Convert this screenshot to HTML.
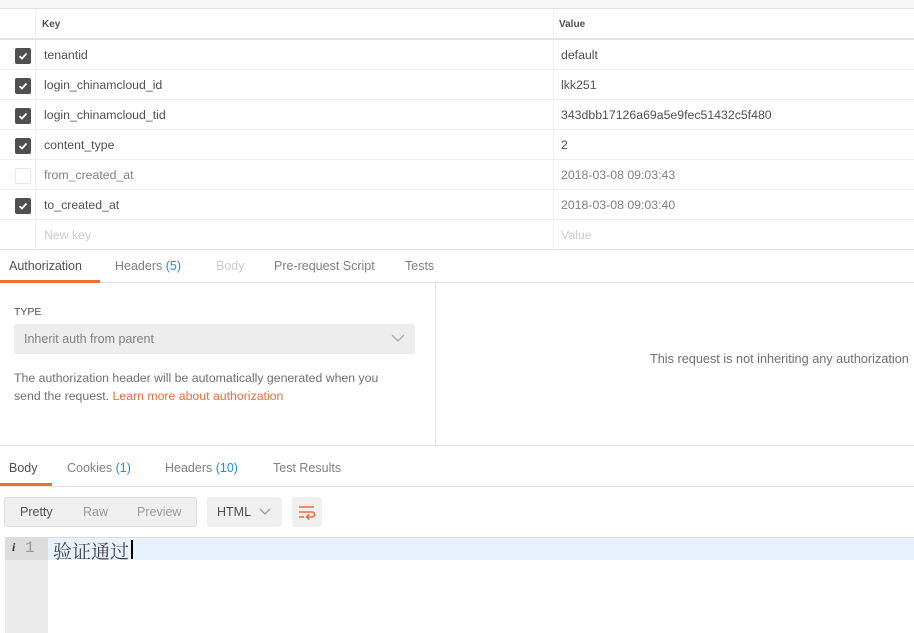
<!DOCTYPE html><html><head><style>
*{box-sizing:border-box;margin:0;padding:0}
body{width:914px;height:633px;overflow:hidden;background:#fff;font-family:"Liberation Sans",sans-serif;font-size:12px;color:#505050;position:relative}
.a{position:absolute}
.row{position:absolute;left:0;width:914px;height:30px;border-bottom:1px solid #ececec}
.cb{position:absolute;left:15px;top:8px;width:16px;height:16px;border-radius:2px;background:#505050}
.cb svg{position:absolute;left:3px;top:3px}
.cbe{background:#fff;border:1px solid #e6e6e6}
.k{position:absolute;left:44px;top:8px;font-size:12.3px}
.v{position:absolute;left:561px;top:8px;font-size:12.3px}
.vl{position:absolute;top:0;width:1px;height:30px;background:#f0f0f0}
.tab{position:absolute;font-size:12.5px;color:#808080}
.blue{color:#1a8fe8}
</style></head><body>
<div class="a" style="left:0;top:0;width:914px;height:9px;background:#f7f7f7;border-bottom:1px solid #e3e3e3"></div>
<div class="row" style="top:9px;border-bottom:2px solid #e3e3e3;height:31px"><div class="vl" style="left:35px"></div><div class="vl" style="left:553px"></div><b style="position:absolute;left:42px;top:10px;font-size:10px;color:#505050">Key</b><b style="position:absolute;left:559px;top:10px;font-size:10px;color:#505050">Value</b></div>
<div class="row" style="top:40px"><div class="vl" style="left:35px"></div><div class="vl" style="left:553px"></div><div class="cb"><svg width="10" height="10"><path d="M1.5 5.2L4 7.5L8.5 2.5" stroke="#fff" stroke-width="1.8" fill="none"/></svg></div><span class="k">tenantid</span><span class="v">default</span></div>
<div class="row" style="top:70px"><div class="vl" style="left:35px"></div><div class="vl" style="left:553px"></div><div class="cb"><svg width="10" height="10"><path d="M1.5 5.2L4 7.5L8.5 2.5" stroke="#fff" stroke-width="1.8" fill="none"/></svg></div><span class="k">login_chinamcloud_id</span><span class="v">lkk251</span></div>
<div class="row" style="top:100px"><div class="vl" style="left:35px"></div><div class="vl" style="left:553px"></div><div class="cb"><svg width="10" height="10"><path d="M1.5 5.2L4 7.5L8.5 2.5" stroke="#fff" stroke-width="1.8" fill="none"/></svg></div><span class="k">login_chinamcloud_tid</span><span class="v">343dbb17126a69a5e9fec51432c5f480</span></div>
<div class="row" style="top:130px"><div class="vl" style="left:35px"></div><div class="vl" style="left:553px"></div><div class="cb"><svg width="10" height="10"><path d="M1.5 5.2L4 7.5L8.5 2.5" stroke="#fff" stroke-width="1.8" fill="none"/></svg></div><span class="k">content_type</span><span class="v">2</span></div>
<div class="row" style="top:160px"><div class="vl" style="left:35px"></div><div class="vl" style="left:553px"></div><div class="cb cbe"></div><span class="k" style="color:#808080">from_created_at</span><span class="v" style="color:#808080">2018-03-08 09:03:43</span></div>
<div class="row" style="top:190px"><div class="vl" style="left:35px"></div><div class="vl" style="left:553px"></div><div class="cb"><svg width="10" height="10"><path d="M1.5 5.2L4 7.5L8.5 2.5" stroke="#fff" stroke-width="1.8" fill="none"/></svg></div><span class="k">to_created_at</span><span class="v" style="color:#808080">2018-03-08 09:03:40</span></div>
<div class="row" style="top:220px;border-bottom:1px solid #e3e3e3"><div class="vl" style="left:35px"></div><div class="vl" style="left:553px"></div><span class="k" style="color:#ccc">New key</span><span class="v" style="color:#ccc">Value</span></div>
<div class="a" style="left:0;top:250px;width:914px;height:33px;border-bottom:1px solid #e3e3e3"></div>
<div class="a" style="left:0;top:280px;width:100px;height:3px;background:#f26b3a"></div>
<span class="tab" style="left:9px;top:259px;color:#505050">Authorization</span>
<span class="tab" style="left:115px;top:259px">Headers <span class="blue">(5)</span></span>
<span class="tab" style="left:216px;top:259px;color:#ccc">Body</span>
<span class="tab" style="left:274px;top:259px">Pre-request Script</span>
<span class="tab" style="left:405px;top:259px">Tests</span>
<div class="a" style="left:435px;top:283px;width:1px;height:162px;background:#e3e3e3"></div>
<span class="a" style="left:14px;top:306px;font-size:10.5px;color:#505050">TYPE</span>
<div class="a" style="left:14px;top:324px;width:401px;height:30px;background:#ededed;border-radius:3px"></div>
<span class="a" style="left:24px;top:332px;font-size:12.5px;color:#808080">Inherit auth from parent</span>
<svg class="a" style="left:391px;top:334px" width="14" height="9"><path d="M1 1L7 7L13 1" stroke="#aaa" stroke-width="1.3" fill="none"/></svg>
<div class="a" style="left:14px;top:369px;width:385px;line-height:18px;font-size:12.3px;color:#707070">The authorization header will be automatically generated when you send the request. <span style="color:#f26b3a">Learn more about authorization</span></div>
<span class="a" style="left:650px;top:352px;font-size:12.7px;color:#707070">This request is not inheriting any authorization</span>
<div class="a" style="left:0;top:445px;width:914px;height:1px;background:#e3e3e3"></div>
<div class="a" style="left:0;top:486px;width:914px;height:1px;background:#e3e3e3"></div>
<div class="a" style="left:0;top:483px;width:52px;height:3px;background:#f26b3a"></div>
<span class="tab" style="left:9px;top:461px;color:#505050">Body</span>
<span class="tab" style="left:67px;top:461px">Cookies <span class="blue">(1)</span></span>
<span class="tab" style="left:165px;top:461px">Headers <span class="blue">(10)</span></span>
<span class="tab" style="left:273px;top:461px">Test Results</span>
<div class="a" style="left:4px;top:497px;width:193px;height:30px;background:#efefef;border:1px solid #ddd;border-radius:3px"></div>
<span class="a" style="left:20px;top:505px;font-size:12.5px;color:#505050">Pretty</span>
<span class="a" style="left:83px;top:505px;font-size:12.5px;color:#999">Raw</span>
<span class="a" style="left:137px;top:505px;font-size:12.5px;color:#999">Preview</span>
<div class="a" style="left:207px;top:497px;width:75px;height:30px;background:#efefef;border-radius:3px"></div>
<span class="a" style="left:217px;top:505px;font-size:12.5px;color:#505050">HTML</span>
<svg class="a" style="left:259px;top:508px" width="12" height="8"><path d="M1 1L6 6L11 1" stroke="#999" stroke-width="1.3" fill="none"/></svg>
<div class="a" style="left:292px;top:497px;width:30px;height:30px;background:#efefef;border-radius:3px"></div>
<svg class="a" style="left:298px;top:503px" width="18" height="18"><path d="M1 4H16M1 9H14a2.5 2.5 0 0 1 0 5H9M1 14H6M11 11.5L8.5 14L11 16.5" stroke="#f26b3a" stroke-width="1.6" fill="none"/></svg>
<div class="a" style="left:5px;top:537px;width:909px;height:1px;background:#ddd"></div>
<div class="a" style="left:5px;top:538px;width:43px;height:95px;background:#ebebeb"></div>
<div class="a" style="left:48px;top:538px;width:866px;height:22px;background:#e8f2fe"></div>
<div class="a" style="left:5px;top:538px;width:43px;height:22px;background:#dcdcdc"></div>
<span class="a" style="left:12px;top:540px;font-family:'Liberation Serif',serif;font-style:italic;font-size:12px;color:#333;font-weight:bold">i</span>
<span class="a" style="left:25px;top:539px;font-family:'Liberation Mono',monospace;font-size:16px;color:#999">1</span>
<span class="a" style="left:53px;top:537px;font-family:'Liberation Serif','Noto Serif CJK SC',serif;font-size:19px;color:#444">验证通过</span>
<div class="a" style="left:131px;top:540px;width:2px;height:19px;background:#000"></div>
</body></html>
